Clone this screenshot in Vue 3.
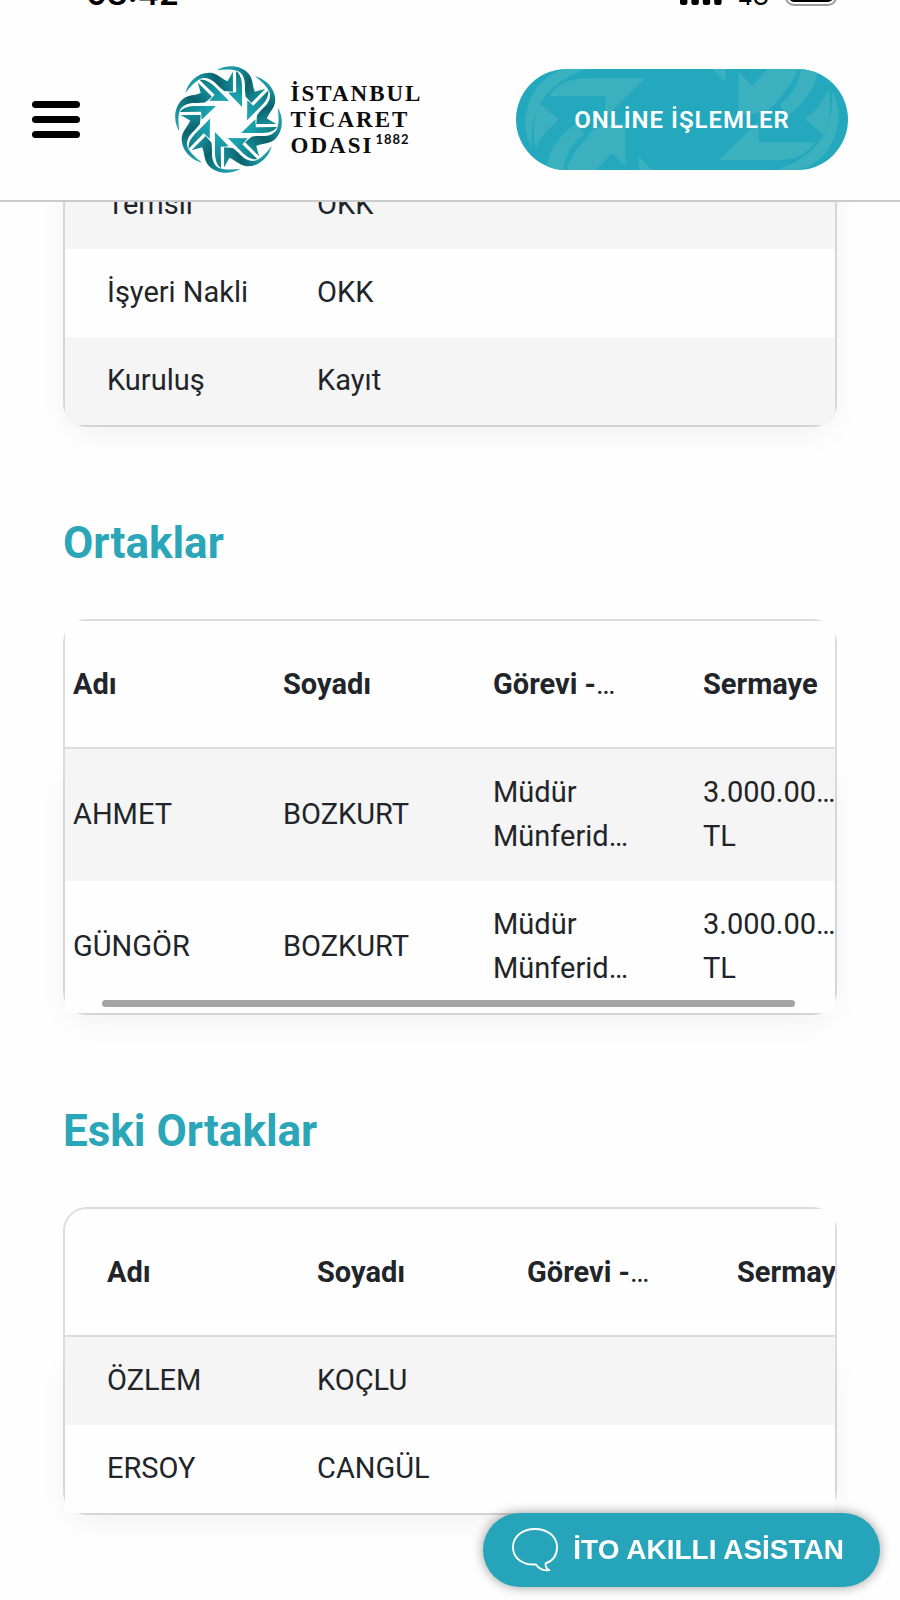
<template>
  <div class="page">
    <header class="header">
      <div class="status">
        <span class="time">08:42</span>
        <div class="status-right">
          <svg class="signal" viewBox="0 0 42 30" aria-hidden="true">
            <rect v-for="n in 4" :key="n" :x="(n - 1) * 11.4" :y="24 - n * 6" width="7.4" :height="n * 6 + 5" rx="2.5" />
          </svg>
          <span class="net">4G</span>
          <svg class="battery" viewBox="0 0 52 30" aria-hidden="true">
            <rect x="1" y="1" width="50" height="28" rx="8" fill="none" stroke="#9b9b9b" stroke-width="2" />
            <rect x="4" y="4" width="44" height="22" rx="5" />
          </svg>
        </div>
      </div>
      <div class="bar">
        <button class="menu" type="button" aria-label="Menü">
          <span></span>
          <span></span>
          <span></span>
        </button>
        <a class="logo" href="#">
          <svg class="emblem" viewBox="-165 -165 330 330" aria-hidden="true">
            <defs>
              <linearGradient id="bandFill" gradientUnits="userSpaceOnUse" x1="-34" y1="-146" x2="90" y2="-60">
                <stop offset="0" stop-color="#22a3ae" />
                <stop offset="0.3" stop-color="#16939e" />
                <stop offset="0.65" stop-color="#0b626c" />
                <stop offset="1" stop-color="#15929d" />
              </linearGradient>
              <linearGradient id="headFill" gradientUnits="userSpaceOnUse" x1="118" y1="-90" x2="64" y2="-20">
                <stop offset="0" stop-color="#0e7782" />
                <stop offset="0.4" stop-color="#128a95" />
                <stop offset="1" stop-color="#1ba3af" />
              </linearGradient>
              <g id="arrow">
                <!-- tail and band -->
                <path
                  d="M-36 -149 C-5 -168 38 -166 62 -138 C75 -120 72 -102 80 -84 L112 -93 L69 -50 L52 -70 C50 -80 50 -90 50 -102 C50 -124 43 -138 30 -146 C12 -154 -12 -152 -36 -149Z"
                  fill="url(#bandFill)"
                />
                <!-- head -->
                <path d="M56 2 L102 -44 C118 -62 122 -74 120 -88 L75 -42 L57 -58Z" fill="url(#headFill)" />
              </g>
            </defs>
            <use v-for="n in 8" :key="n" href="#arrow" :transform="`rotate(${n * 45})`" />
          </svg>
          <span class="logo-text">
            <span>İSTANBUL</span>
            <span>TİCARET</span>
            <span>ODASI<sup>1882</sup></span>
          </span>
        </a>
        <button class="online" type="button">
          <svg class="pattern" viewBox="0 0 996 303" preserveAspectRatio="none" aria-hidden="true">
            <g id="half" fill="#3bb1c0">
              <path d="M150 0 C80 12 28 85 28 165 C29 195 36 215 48 235 C38 130 90 35 215 0Z" />
              <path d="M73 105 L130 152 C100 175 70 205 60 240 C48 200 52 140 73 105Z" />
              <path d="M98 82 C125 42 165 28 215 28 H388 L268 145 V82Z" />
              <path d="M92 290 C100 240 135 195 185 160 L205 195 C170 220 150 255 140 303 H105Z" />
              <path d="M152 303 C165 250 200 225 225 190 C240 175 270 165 328 165 V292 L288 252 L240 303Z" />
              <path d="M368 262 L408 303 H368Z" />
            </g>
            <use href="#half" transform="rotate(180 498 151)" />
          </svg>
          <span class="online-text">ONLİNE İŞLEMLER</span>
        </button>
      </div>
    </header>

    <main class="content">
      <section class="card no-head">
        <div class="scroller">
          <table>
            <tbody>
              <tr v-for="row in changes" :key="row[0]">
                <td v-for="(cell, i) in row" :key="i">{{ cell }}</td>
                <td></td>
                <td></td>
              </tr>
            </tbody>
          </table>
        </div>
      </section>

      <h2>Ortaklar</h2>
      <section class="card">
        <div ref="partnersRef" class="scroller">
          <table>
            <thead>
              <tr>
                <th v-for="h in heads" :key="h.text">{{ h.text }}<span v-if="h.cut">…</span></th>
              </tr>
            </thead>
            <tbody>
              <tr v-for="p in partners" :key="p.name">
                <td>{{ p.name }}</td>
                <td>{{ p.surname }}</td>
                <td>Müdür<br />Münferid…</td>
                <td>3.000.00…<br />TL</td>
              </tr>
            </tbody>
          </table>
        </div>
        <div class="thumb"></div>
      </section>

      <h2>Eski Ortaklar</h2>
      <section class="card">
        <div class="scroller round">
          <table>
            <thead>
              <tr>
                <th v-for="h in heads" :key="h.text">{{ h.text }}<span v-if="h.cut">…</span></th>
              </tr>
            </thead>
            <tbody>
              <tr v-for="p in oldPartners" :key="p.name">
                <td>{{ p.name }}</td>
                <td>{{ p.surname }}</td>
                <td></td>
                <td></td>
              </tr>
            </tbody>
          </table>
        </div>
      </section>
    </main>

    <button class="assistant" type="button">
      <svg viewBox="0 0 50 48" aria-hidden="true">
        <path
          d="M26 39 C13 40 2 33 2 21 C2 10 12 2 25 2 C38 2 48 10 48 21 C48 29 44 35 36 38 C36 41 37 44 40 45 C34 46 28 43 26 39Z"
          fill="none"
          stroke="#fff"
          stroke-width="2"
          stroke-linejoin="round"
        />
      </svg>
      <span>İTO AKILLI ASİSTAN</span>
    </button>
  </div>
</template>

<script setup>
import { ref, onMounted } from "vue";

const changes = [
  ["Temsil", "OKK"],
  ["İşyeri Nakli", "OKK"],
  ["Kuruluş", "Kayıt"],
];

const heads = [
  { text: "Adı" },
  { text: "Soyadı" },
  { text: "Görevi -", cut: true },
  { text: "Sermaye" },
];

const partners = [
  { name: "AHMET", surname: "BOZKURT" },
  { name: "GÜNGÖR", surname: "BOZKURT" },
];

const oldPartners = [
  { name: "ÖZLEM", surname: "KOÇLU" },
  { name: "ERSOY", surname: "CANGÜL" },
];

const partnersRef = ref(null);

onMounted(() => {
  // first table is already scrolled a little to the right
  partnersRef.value.scrollLeft = 34;
});
</script>

<style>
body {
  margin: 0;
  background: #fefefe;
}
</style>

<style scoped>
.page {
  min-height: 100vh;
  box-sizing: border-box;
  font-family: Roboto, "Noto Sans", sans-serif;
  color: #212529;
}
button {
  border: 0;
  padding: 0;
  font: inherit;
  cursor: pointer;
}
.header {
  position: fixed;
  top: 0;
  left: 0;
  right: 0;
  z-index: 5;
  background: #fefefe;
  border-bottom: 2px solid #cbcbcb;
}
/* status strip, only its lower edge is visible */
.status {
  display: flex;
  justify-content: space-between;
  align-items: flex-end;
  height: 6px;
  padding: 0 63px 0 86px;
  overflow: hidden;
  font-family: Inter, sans-serif;
  color: #000;
}
.time {
  font-size: 32px;
  line-height: 24px;
  font-weight: 600;
}
.status-right {
  display: flex;
  align-items: flex-end;
  gap: 16px;
}
.signal {
  width: 42px;
  height: 30px;
}
.net {
  font-size: 22px;
  line-height: 18px;
  font-weight: 500;
}
.battery {
  width: 52px;
  height: 30px;
}
.bar {
  display: flex;
  align-items: center;
  justify-content: space-between;
  height: 194px;
  padding: 33px 52px 0 32px;
  box-sizing: border-box;
}
.menu {
  display: flex;
  flex-direction: column;
  gap: 8px;
  width: 48px;
  background: none;
}
.menu span {
  height: 7px;
  border-radius: 4px;
  background: #000;
}
.logo {
  display: flex;
  align-items: center;
  gap: 8px;
  color: #0c0c0c;
  text-decoration: none;
}
.emblem {
  width: 109px;
  height: 109px;
}
.logo-text {
  display: flex;
  flex-direction: column;
  font-family: "Liberation Serif", serif;
  font-size: 23px;
  line-height: 26px;
  font-weight: 700;
  letter-spacing: 2px;
}
.logo-text span {
  white-space: nowrap;
}
.logo-text sup {
  margin-left: 2px;
  font-family: Lato, sans-serif;
  font-size: 13px;
  line-height: 0;
  letter-spacing: 1px;
}
.online {
  position: relative;
  width: 332px;
  height: 101px;
  border-radius: 51px;
  overflow: hidden;
  background: #24a8bd;
  color: #fff;
}
.pattern {
  position: absolute;
  inset: 0;
  width: 100%;
  height: 100%;
}
.online-text {
  position: relative;
  font-size: 24px;
  line-height: 28px;
  font-weight: 600;
  letter-spacing: 1px;
}
.content {
  padding: 159px 63px 85px;
}
h2 {
  margin: 86px 0 46px;
  font-size: 44px;
  line-height: 60px;
  font-weight: 700;
  color: #2aa6b8;
}
.card {
  position: relative;
  isolation: isolate;
  border: 2px solid #dcdcdc;
  border-radius: 24px;
}
/* shadow starts under the table head */
.card::before {
  content: "";
  position: absolute;
  z-index: -1;
  inset: 140px 0 0;
  border-radius: 24px;
  box-shadow: 0 10px 30px -2px rgba(0, 0, 0, 0.06);
}
.card.no-head::before {
  top: 0;
}
.scroller {
  overflow-x: auto;
  scrollbar-width: none;
  background: #fefefe;
}
.round {
  border-top-left-radius: 22px;
}
.no-head .scroller {
  border-radius: 12px;
}
table {
  width: 840px;
  min-width: 100%;
  table-layout: fixed;
  border-spacing: 0;
  font-size: 29px;
  line-height: 44px;
}
th,
td {
  padding: 21px 0 23px 42px;
  height: 44px;
  text-align: left;
  white-space: nowrap;
}
th {
  padding-top: 41px;
  padding-bottom: 41px;
  border-bottom: 2px solid #dcdcdc;
  font-weight: 700;
}
th span {
  font-weight: 400;
}
tbody tr:nth-child(odd) {
  background: #f5f5f5;
}
.thumb {
  position: absolute;
  left: 37px;
  right: 40px;
  bottom: 6px;
  height: 7px;
  border-radius: 4px;
  background: #a4a4a4;
}
.assistant {
  position: fixed;
  right: 20px;
  bottom: 13px;
  z-index: 6;
  display: flex;
  align-items: center;
  gap: 14px;
  height: 74px;
  padding: 0 36px 0 28px;
  border-radius: 37px;
  background: #26a4ba;
  box-shadow: 0 0 12px rgba(0, 0, 0, 0.4);
  color: #fff;
  font-family: "Liberation Sans", sans-serif;
  font-size: 28px;
  font-weight: 700;
  white-space: nowrap;
}
.assistant svg {
  width: 48px;
  height: 46px;
}
</style>
